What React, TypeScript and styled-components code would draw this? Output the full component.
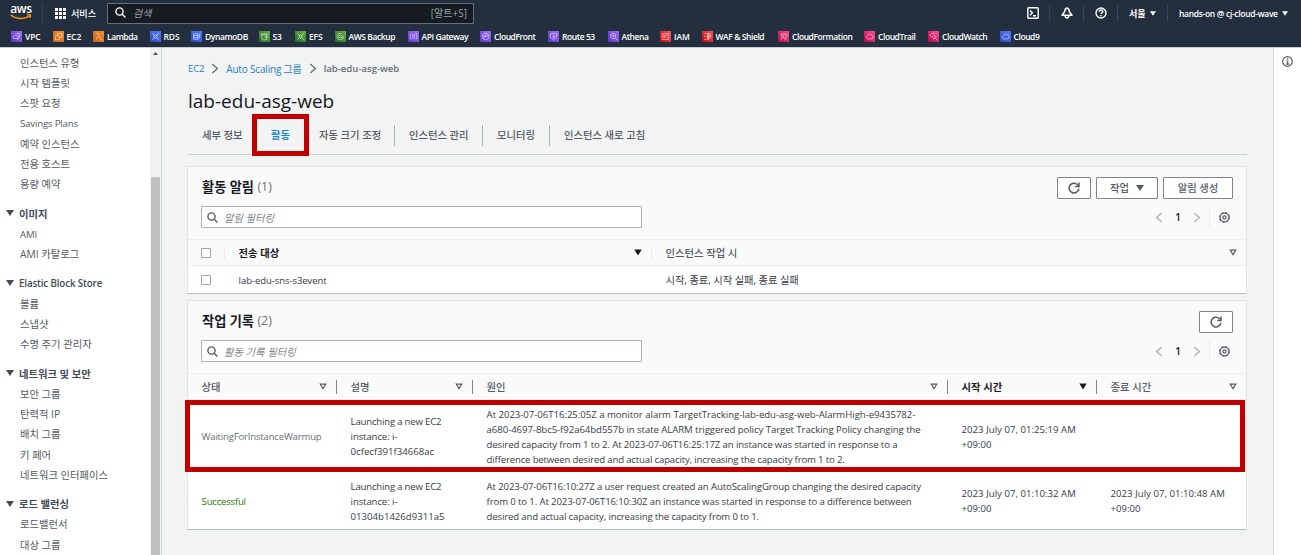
import React from "react";
import styled, { createGlobalStyle, css } from "styled-components";

const sans = `"Open Sans", "Noto Sans CJK KR", sans-serif`;

const GlobalStyle = createGlobalStyle`
  * { box-sizing: border-box; }
  body {
    margin: 0;
    background: #f2f3f3;
    font-family: ${sans};
    font-size: 10.3px;
    color: #3c4450;
    overflow: hidden;
  }
  h1, h2, p { margin: 0; font-weight: 400; }
`;

const Text = styled.span<{ $ls?: number; $size?: number }>`
  letter-spacing: ${(p) => p.$ls ?? 0}px;
  white-space: nowrap;
  ${(p) => p.$size && `font-size: ${p.$size}px;`}
`;

/* ---------- Shell ---------- */

const Page = styled.div`
  display: flex;
  flex-direction: column;
  width: 1301px;
  height: 555px;
  overflow: hidden;
`;

const Header = styled.header`
  flex: none;
  height: 47px;
  background: #232f3e;
  color: #fff;
  display: flex;
  flex-direction: column;
`;

const TopBar = styled.div`
  display: flex;
  align-items: center;
  height: 26px;
`;

const LogoCell = styled.div`
  width: 43px;
  height: 20px;
  padding-left: 10px;
  border-right: 1px solid #354150;
`;

const Logo = styled.div`
  width: 22px;
  height: 18px;
  display: flex;
  flex-direction: column;
  align-items: center;
  font-size: 12px;
  font-weight: 600;
  line-height: 11px;
  letter-spacing: -0.4px;
  svg { display: block; }
`;

const Services = styled.div`
  width: 64px;
  display: flex;
  align-items: center;
  gap: 5px;
  padding-left: 12px;
  font-weight: 500;
  font-size: 9.1px;
`;

const SearchBox = styled.div`
  width: 367px;
  height: 21px;
  border: 1px solid #687078;
  border-radius: 1px;
  background: #161a21;
  display: flex;
  align-items: center;
  padding: 0 6px 1px 7px;
  color: #95a5a6;
  font-size: 10px;
  em { margin-left: 7px; flex: 1; }
`;

const TopTools = styled.div`
  margin-left: auto;
  display: flex;
  align-items: center;
`;

const Tool = styled.div<{ $w: number; $divided?: boolean }>`
  width: ${(p) => p.$w}px;
  height: 16px;
  display: flex;
  align-items: center;
  padding-left: 11px;
  gap: 4px;
  font-size: 9.1px;
  font-weight: 600;
  border-left: 1px solid ${(p) => (p.$divided ? "#3a4654" : "transparent")};
`;

const Favorites = styled.nav`
  display: flex;
  align-items: center;
  height: 21px;
  padding-left: 11px;
`;

const Favorite = styled.a<{ $w: number; $tight?: boolean }>`
  width: ${(p) => p.$w}px;
  flex: none;
  display: flex;
  align-items: center;
  gap: 3px;
  font-size: 8.5px;
  font-weight: 600;
  line-height: 12px;
  white-space: nowrap;
  letter-spacing: ${(p) => (p.$tight ? -0.43 : -0.12)}px;
`;

const Body = styled.div`
  flex: 1;
  display: flex;
  min-height: 0;
  border-top: 1px solid #c9cdd1;
`;

/* ---------- Sidebar ---------- */

const Sidebar = styled.aside`
  width: 162px;
  flex: none;
  display: flex;
  background: #fff;
  border-right: 1px solid #d5dbdb;
`;

const SideList = styled.div`
  width: 150px;
  padding-top: 4.6px;
`;

const SideItem = styled.div<{ $latin?: boolean }>`
  height: 20.3px;
  line-height: 20.3px;
  padding-left: 20px;
  color: #545b64;
  ${(p) =>
    p.$latin &&
    css`
      font-size: 9.7px;
      line-height: 22px;
      letter-spacing: -0.2px;
    `}
`;

const SideHeading = styled.div<{ $latin?: boolean }>`
  height: 21px;
  margin-top: 8.2px;
  display: flex;
  align-items: center;
  gap: 5px;
  padding-left: 6px;
  color: #424b57;
  font-weight: 600;
  ${(p) =>
    p.$latin &&
    css`
      font-size: 9.8px;
      letter-spacing: -0.15px;
    `}
`;

const ScrollTrack = styled.div`
  width: 11px;
  background: #f1f1f1;
  display: flex;
  flex-direction: column;
  align-items: center;
  padding-top: 4px;
`;

const ScrollThumb = styled.div`
  margin-top: 122px;
  width: 9px;
  flex: 1;
  background: #c1c1c1;
`;

/* ---------- Main ---------- */

const Main = styled.main`
  flex: 1;
  background: #f2f3f3;
  padding: 12px 26px 0;
`;

const InfoRail = styled.aside`
  width: 28px;
  flex: none;
  background: #fff;
  border-left: 1px solid #d5dbdb;
  padding: 8px 0 0 8px;
`;

const Breadcrumb = styled.nav`
  display: flex;
  align-items: center;
  height: 17px;
  gap: 7px;
  color: #545b64;
`;

const Crumb = styled(Text)<{ $current?: boolean }>`
  color: ${(p) => (p.$current ? "#687078" : "#2a7fc1")};
  font-weight: ${(p) => (p.$current ? 600 : 400)};
`;

const PageTitle = styled.h1`
  height: 30px;
  margin-top: 9px;
  line-height: 30px;
  font-size: 19px;
  color: #16191f;
`;

const Tabs = styled.div`
  display: flex;
  align-items: center;
  height: 39px;
  border-bottom: 1.5px solid #c9d0d0;
`;

const Tab = styled.div<{ $w: number; $active?: boolean; $divided?: boolean }>`
  position: relative;
  width: ${(p) => p.$w}px;
  height: 21px;
  line-height: 21px;
  padding-left: 14px;
  font-weight: ${(p) => (p.$active ? 700 : 500)};
  color: ${(p) => (p.$active ? "#1f86cc" : "#545b64")};
  border-right: 1px solid ${(p) => (p.$divided ? "#aab7b8" : "transparent")};
`;

const TabMarker = styled.div`
  position: absolute;
  left: -5px;
  top: -11px;
  width: 57px;
  height: 42px;
  border: 5px solid #c00000;
`;

const Panel = styled.section<{ $top: number; $h: number }>`
  margin: ${(p) => p.$top}px 0 0 -1px;
  height: ${(p) => p.$h}px;
  background: #fff;
  border: 1px solid #e1e5e5;
  border-bottom-color: #b5bcbe;
`;

const PanelHead = styled.div`
  height: 72px;
  background: #fafafa;
  padding: 10px 13px 0 13px;
  display: flex;
  justify-content: space-between;
`;

const PanelLeft = styled.div`
  display: flex;
  flex-direction: column;
`;

const PanelTitle = styled.h2`
  height: 20px;
  line-height: 18px;
  padding-left: 1px;
  display: flex;
  align-items: center;
  gap: 3.5px;
  font-size: 13.2px;
  font-weight: 600;
  color: #16191f;
`;

const Count = styled.span`
  color: #687078;
  font-weight: 400;
  font-size: 12.4px;
`;

const Filter = styled.div`
  margin-top: 9px;
  width: 441px;
  height: 22px;
  border: 1px solid #a9b5b6;
  border-radius: 1px;
  background: #fff;
  display: flex;
  align-items: center;
  gap: 6px;
  padding-left: 5px;
  color: #7c848b;
  font-style: italic;
`;

const PanelRight = styled.div`
  display: flex;
  flex-direction: column;
  align-items: flex-end;
`;

const Actions = styled.div`
  display: flex;
  gap: 5px;
`;

const Button = styled.button<{ $w: number }>`
  width: ${(p) => p.$w}px;
  height: 22px;
  padding: 0 0 1px;
  display: flex;
  align-items: center;
  justify-content: center;
  gap: 7px;
  background: #fff;
  border: 1px solid #7d858c;
  border-radius: 1px;
  color: #545b64;
  font: 500 10.3px ${sans};
`;

const Pager = styled.div`
  display: flex;
  align-items: center;
  height: 22px;
  margin-top: 7px;
  color: #16191f;
  font-weight: 600;
  font-size: 10px;
`;

const PageNo = styled.span`
  width: 30px;
  text-align: center;
`;

const Gear = styled.span`
  height: 22px;
  margin-left: 8px;
  padding: 0 3px 0 9px;
  border-left: 1px solid #eaeded;
  display: flex;
  align-items: center;
`;

const row = css<{ $cols: string }>`
  display: grid;
  grid-template-columns: ${(p) => p.$cols};
  align-items: center;
`;

const HeadRow = styled.div<{ $cols: string }>`
  ${row}
  height: 27px;
  background: #fafafa;
  border-top: 1px solid #eaeded;
  border-bottom: 1px solid #eaeded;
`;

const HeadCell = styled.div<{ $active?: boolean; $rule?: string }>`
  height: 14px;
  display: flex;
  align-items: center;
  justify-content: space-between;
  padding: 0 9px 0 13.6px;
  font-weight: ${(p) => (p.$active ? 600 : 500)};
  color: ${(p) => (p.$active ? "#16191f" : "#545b64")};
  border-right: 1px solid ${(p) => p.$rule ?? "transparent"};
  &:last-child { padding-right: 8px; }
`;

const DataRow = styled.div<{ $cols: string; $h: number }>`
  ${row}
  position: relative;
  height: ${(p) => p.$h}px;
`;

const Cell = styled.div<{ $tone?: string }>`
  padding-left: 13.6px;
  padding-top: 1px;
  line-height: 15px;
  white-space: nowrap;
  color: ${(p) => p.$tone ?? "#363d47"};
`;

const Line = styled.p<{ $ls: number }>`
  font-size: 9.6px;
  letter-spacing: ${(p) => p.$ls}px;
`;

const Checkbox = styled.span`
  display: block;
  width: 10px;
  height: 10px;
  margin-left: -0.8px;
  border: 1px solid #9aa7a8;
  border-radius: 1px;
  background: #fff;
`;

const RowMarker = styled.div`
  position: absolute;
  left: -3px;
  top: 0;
  width: 1060px;
  height: 72px;
  border: 5px solid #c00000;
`;

/* ---------- Icons ---------- */

const Caret = ({ w = 8, h = 6, color = "currentColor" }) => (
  <svg width={w} height={h} viewBox="0 0 8 6">
    <path d="M0 0h8L4 6z" fill={color} />
  </svg>
);

const SortCaret = ({ filled = false }) => (
  <svg width="8" height="7" viewBox="0 0 8 7">
    <path
      d={filled ? "M0.3 0.6h7.4L4 6.6z" : "M1.3 1.2h5.4L4 5.6z"}
      fill={filled ? "#16191f" : "none"}
      stroke={filled ? "none" : "#545b64"}
      strokeWidth="1.2"
    />
  </svg>
);

const Chevron = ({ left = false, color = "#687078", w = 8, h = 11 }) => (
  <svg width={w} height={h} viewBox="0 0 8 11">
    <path d={left ? "M6.7 1 1.6 5.5l5.1 4.5" : "M1.3 1l5.1 4.5L1.3 10"} fill="none" stroke={color} strokeWidth="1.4" />
  </svg>
);

const SearchIcon = ({ color = "#545b64" }) => (
  <svg width="11" height="11" viewBox="0 0 11 11" fill="none" stroke={color} strokeWidth="1.4">
    <circle cx="4.5" cy="4.5" r="3.6" />
    <path d="M7.2 7.2l3.2 3.2" />
  </svg>
);

const RefreshIcon = () => (
  <svg width="12" height="12" viewBox="0 0 12 12" fill="none" stroke="#545b64" strokeWidth="1.5">
    <path d="M10.9 6.6A4.9 4.9 0 1 1 9.4 2.5L10.6 3.7" />
    <path d="M11 0.6v3.8H7.2" />
  </svg>
);

const GearIcon = () => (
  <svg width="11" height="11" viewBox="0 0 11 11" fill="none" stroke="#545b64">
    <circle cx="5.5" cy="5.5" r="4.4" strokeWidth="1.3" />
    <circle cx="5.5" cy="5.5" r="5" strokeWidth="1" strokeDasharray="2 1.93" />
    <circle cx="5.5" cy="5.5" r="1.6" strokeWidth="1.2" />
  </svg>
);

const InfoIcon = () => (
  <svg width="11" height="11" viewBox="0 0 11 11" fill="none" stroke="#545b64" strokeWidth="1.2">
    <circle cx="5.5" cy="5.5" r="4.8" />
    <path d="M4.3 5h1.4v3M4 8.1h3.2M5 2.9h1.3" />
  </svg>
);

const GridIcon = () => (
  <svg width="11" height="11" viewBox="0 0 11 11" fill="#fff">
    {[0, 4, 8].map((y) => [0, 4, 8].map((x) => <rect key={`${x}-${y}`} x={x} y={y} width="3" height="3" />))}
  </svg>
);

const TerminalIcon = () => (
  <svg width="12" height="12" viewBox="0 0 12 12" fill="none" stroke="#fff" strokeWidth="1.4">
    <rect x="0.8" y="0.8" width="10.4" height="10.4" rx="0.8" />
    <path d="M3 3.4l2.4 2.4L3 8.2M6 8.8h3" />
  </svg>
);

const BellIcon = () => (
  <svg width="12" height="12" viewBox="0 0 12 12" fill="none" stroke="#fff" strokeWidth="1.5">
    <path d="M6 0.9C4.4 1.2 3.9 2.6 3.8 4.2 3.6 5.6 2 6.6 1 8.2h10C10 6.6 8.4 5.6 8.2 4.2 8.1 2.6 7.6 1.2 6 0.9z" strokeLinejoin="round" />
    <path d="M4.2 8.6c0 3.2 3.6 3.2 3.6 0" />
  </svg>
);

const HelpIcon = () => (
  <svg width="12" height="12" viewBox="0 0 12 12" fill="none" stroke="#fff" strokeWidth="1.4">
    <circle cx="6" cy="6" r="5" />
    <path d="M4.2 4.8c0-2.4 3.6-2.2 3.6-0.1C7.8 5.9 6 5.8 6 7.1M6 8v1.2" />
  </svg>
);

const glyphs: Record<string, string> = {
  vpc: "M5.4 2L7.8 2.8v2.6L5.6 8M2.4 6.8a1.2 1.2 0 0 1 .4-2.2 1.5 1.5 0 0 1 2.8 0 1.1 1.1 0 0 1 0 2.2z",
  ec2: "M2 4.4h3.8V8H2zM4.2 4.4V2.2H8v3.6H5.8",
  lambda: "M3 2.2h1.6L7.2 8h1M4.6 4.6L2.6 8",
  rds: "M2 2l1.8 1.8M8 2L6.2 3.8M2 8l1.8-1.8M8 8L6.2 6.2M3.7 3.7h2.6v2.6H3.7z",
  dynamo: "M2.4 2.6h3.8M2.4 2.6v5h3.8v-5M2.4 4.3h3.8M2.4 6h3.8M8 2.4L7 4.6h1.1L7 7",
  s3: "M2.2 2.8h5.2L6.8 8H2.8zM2.2 2.8c1 1 4.2 1 5.2 0M4.8 5l3.2 1",
  efs: "M2 2l2 2M8 2L6 4M2 8l2-2M8 8L6 6M4 4h2.2v2.2H4z",
  backup: "M5 2a3 3 0 1 0 2.9 3M3.6 6a1 1 0 0 1 .4-1.7 1.2 1.2 0 0 1 2.2 0A1 1 0 0 1 6.4 6z",
  api: "M3.2 2L2 3v4l1.2 1M6.8 2L8 3v4L6.8 8M4.2 2.6v4.8M5.8 2.6v4.8",
  globe: "M5 2a3 3 0 1 0 0.01 0M2.4 4c2 1.4 3.6 1.4 5.2 0M3.2 7.4C4 5 5 4 6.4 2.6",
  route: "M2.2 2.6L5 2l2.8 0.6v3L5 8.2 2.2 5.6zM4.2 4h1.4v1.2H4.4M5.6 5.2v1H4.2",
  athena: "M4.6 2.2a2.4 2.4 0 1 0 0.01 0M6.4 6.2L8.2 8.2M3.4 3.8h2.4M3.4 5.2h2.4",
  iam: "M2 2.6h6v5H2zM3.4 4.2h1.4v1.6H3.4zM6 4h1M6 6h1",
  waf: "M2 2.4h2M2 5h2M2 7.6h2M5 2l2.6 1v3L5 8zM5 5h3M6 2v6",
  formation: "M3 8V6h2.4V4.4H3V2.8h3.4a1.4 1.4 0 0 1 .6 2.8M7 5.6v1.8H5.6",
  cloud: "M3.2 7.2a1.5 1.5 0 0 1 0-2.9 2 2 0 0 1 3.8-0.2 1.6 1.6 0 0 1 .2 3.1z",
  watch: "M2.9 5.4a1.3 1.3 0 0 1 0-2.4 1.9 1.9 0 0 1 3.5 0M5.6 4.2a1.4 1.4 0 1 0 0.01 0M6.6 6.6l1.6 1.6",
};

const palette: Record<string, [string, string]> = {
  purple: ["#5a35c4", "#a070f5"],
  orange: ["#d05c17", "#f79020"],
  blue: ["#2f49b8", "#527fff"],
  green: ["#1f6b2c", "#6cae3e"],
  red: ["#bd0816", "#ff5252"],
  pink: ["#b0084d", "#ff4f8b"],
};

const ServiceIcon = ({ tone, glyph }: { tone: string; glyph: string }) => (
  <svg width="11" height="11" viewBox="0 0 10 10">
    <defs>
      <linearGradient id={`g-${tone}`} x1="0" y1="1" x2="1" y2="0">
        <stop offset="0" stopColor={palette[tone][0]} />
        <stop offset="1" stopColor={palette[tone][1]} />
      </linearGradient>
    </defs>
    <rect width="10" height="10" fill={`url(#g-${tone})`} />
    <path d={glyphs[glyph]} fill="none" stroke="#fff" strokeOpacity="0.8" strokeWidth="0.6" />
  </svg>
);

/* ---------- Data ---------- */

type Fav = [label: string, tone: string, glyph: string, width: number];
const favorites: Fav[] = [
  ["VPC", "purple", "vpc", 41.5],
  ["EC2", "orange", "ec2", 40.5],
  ["Lambda", "orange", "lambda", 56.5],
  ["RDS", "blue", "rds", 41.5],
  ["DynamoDB", "blue", "dynamo", 67.5],
  ["S3", "green", "s3", 36.5],
  ["EFS", "green", "efs", 39.5],
  ["AWS Backup", "green", "backup", 73],
  ["API Gateway", "purple", "api", 72.5],
  ["CloudFront", "purple", "globe", 68],
  ["Route 53", "purple", "route", 59.5],
  ["Athena", "purple", "athena", 52.5],
  ["IAM", "red", "iam", 41.5],
  ["WAF & Shield", "red", "waf", 76.5],
  ["CloudFormation", "pink", "formation", 86],
  ["CloudTrail", "pink", "cloud", 64],
  ["CloudWatch", "pink", "watch", 71.5],
  ["Cloud9", "blue", "cloud", 60],
];

const isLatin = (s: string) => /^[ -~]+$/.test(s);

const groups: { title?: string; items: string[] }[] = [
  { items: ["인스턴스 유형", "시작 템플릿", "스팟 요청", "Savings Plans", "예약 인스턴스", "전용 호스트", "용량 예약"] },
  { title: "이미지", items: ["AMI", "AMI 카탈로그"] },
  { title: "Elastic Block Store", items: ["볼륨", "스냅샷", "수명 주기 관리자"] },
  { title: "네트워크 및 보안", items: ["보안 그룹", "탄력적 IP", "배치 그룹", "키 페어", "네트워크 인터페이스"] },
  { title: "로드 밸런싱", items: ["로드밸런서", "대상 그룹"] },
];

/* A line of table text and its tracking in pixels. */
type TrackedLine = [text: string, tracking: number];

type Activity = {
  tone: string;
  height: number;
  marked: boolean;
  cells: TrackedLine[][];
};

const activities: Activity[] = [
  {
    tone: "#687078",
    height: 72,
    marked: true,
    cells: [
      [["WaitingForInstanceWarmup", -0.2]],
      [
        ["Launching a new EC2", -0.2],
        ["instance: i-", -0.12],
        ["0cfecf391f34668ac", 0],
      ],
      [
        ["At 2023-07-06T16:25:05Z a monitor alarm TargetTracking-lab-edu-asg-web-AlarmHigh-e9435782-", -0.03],
        ["a680-4697-8bc5-f92a64bd557b in state ALARM triggered policy Target Tracking Policy changing the", -0.06],
        ["desired capacity from 1 to 2. At 2023-07-06T16:25:17Z an instance was started in response to a", -0.12],
        ["difference between desired and actual capacity, increasing the capacity from 1 to 2.", -0.16],
      ],
      [
        ["2023 July 07, 01:25:19 AM", 0.02],
        ["+09:00", 0],
      ],
      [],
    ],
  },
  {
    tone: "#1d8102",
    height: 57,
    marked: false,
    cells: [
      [["Successful", -0.22]],
      [
        ["Launching a new EC2", -0.2],
        ["instance: i-", -0.12],
        ["01304b1426d9311a5", 0],
      ],
      [
        ["At 2023-07-06T16:10:27Z a user request created an AutoScalingGroup changing the desired capacity", -0.12],
        ["from 0 to 1. At 2023-07-06T16:10:30Z an instance was started in response to a difference between", -0.12],
        ["desired and actual capacity, increasing the capacity from 0 to 1.", -0.155],
      ],
      [
        ["2023 July 07, 01:10:32 AM", 0.02],
        ["+09:00", 0],
      ],
      [
        ["2023 July 07, 01:10:48 AM", 0.02],
        ["+09:00", 0],
      ],
    ],
  },
];

const alarmCols = "37px 427px 1fr";
const historyCols = "149px 136px 475px 149px 1fr";

const Paging = () => (
  <Pager>
    <Chevron left color="#aab7b8" />
    <PageNo>1</PageNo>
    <Chevron color="#aab7b8" />
    <Gear>
      <GearIcon />
    </Gear>
  </Pager>
);

export default function App() {
  return (
    <Page>
      <GlobalStyle />
      <Header>
        <TopBar>
          <LogoCell>
            <Logo>
              aws
              <svg width="22" height="6" viewBox="0 0 22 6" fill="none" stroke="#ff9900" strokeWidth="1.4">
                <path d="M0.8 1c5 4.4 13.4 4.6 18.6 1.2M17.2 0.8c3-0.6 4 0.2 2.8 3" />
              </svg>
            </Logo>
          </LogoCell>
          <Services>
            <GridIcon />
            <Text>서비스</Text>
          </Services>
          <SearchBox>
            <SearchIcon color="#fff" />
            <em>검색</em>
            <Text>[알트+S]</Text>
          </SearchBox>
          <TopTools>
            <Tool $w={34}>
              <TerminalIcon />
            </Tool>
            <Tool $w={34} $divided>
              <BellIcon />
            </Tool>
            <Tool $w={34} $divided>
              <HelpIcon />
            </Tool>
            <Tool $w={50} $divided>
              <Text>서울</Text>
              <Caret w={6} h={5} />
            </Tool>
            <Tool $w={134} $divided>
              <Text $ls={-0.32} $size={8.5}>
                hands-on @ cj-cloud-wave
              </Text>
              <Caret w={6} h={5} />
            </Tool>
          </TopTools>
        </TopBar>
        <Favorites>
          {favorites.map(([label, tone, glyph, width]) => (
            <Favorite key={label} $w={width} $tight={label.length > 4}>
              <ServiceIcon tone={tone} glyph={glyph} />
              {label}
            </Favorite>
          ))}
        </Favorites>
      </Header>

      <Body>
        <Sidebar>
          <SideList>
            {groups.map((group, i) => (
              <React.Fragment key={i}>
                {group.title && (
                  <SideHeading $latin={isLatin(group.title)}>
                    <Caret />
                    {group.title}
                  </SideHeading>
                )}
                {group.items.map((item) => (
                  <SideItem key={item} $latin={isLatin(item)}>
                    {item}
                  </SideItem>
                ))}
              </React.Fragment>
            ))}
          </SideList>
          <ScrollTrack>
            <svg width="5" height="3" viewBox="0 0 5 3">
              <path d="M0 3h5L2.5 0z" fill="#505050" />
            </svg>
            <ScrollThumb />
          </ScrollTrack>
        </Sidebar>

        <Main>
          <Breadcrumb>
            <Crumb $size={9.6} $ls={-0.2}>
              EC2
            </Crumb>
            <Chevron />
            <Crumb $size={10} $ls={-0.18}>
              Auto Scaling 그룹
            </Crumb>
            <Chevron />
            <Crumb $current $size={9.6} $ls={-0.02}>
              lab-edu-asg-web
            </Crumb>
          </Breadcrumb>
          <PageTitle>
            <Text>lab-edu-asg-web</Text>
          </PageTitle>
          <Tabs>
            <Tab $w={69}>세부 정보</Tab>
            <Tab $w={48} $active>
              활동
              <TabMarker />
            </Tab>
            <Tab $w={90} $divided>
              자동 크기 조정
            </Tab>
            <Tab $w={88} $divided>
              인스턴스 관리
            </Tab>
            <Tab $w={67} $divided>
              모니터링
            </Tab>
            <Tab $w={120}>인스턴스 새로 고침</Tab>
          </Tabs>

          <Panel $top={11} $h={128}>
            <PanelHead>
              <PanelLeft>
                <PanelTitle>
                  <Text>활동 알림</Text>
                  <Count>(1)</Count>
                </PanelTitle>
                <Filter>
                  <SearchIcon />
                  <Text>알림 필터링</Text>
                </Filter>
              </PanelLeft>
              <PanelRight>
                <Actions>
                  <Button $w={34}>
                    <RefreshIcon />
                  </Button>
                  <Button $w={62}>
                    작업
                    <Caret />
                  </Button>
                  <Button $w={70}>알림 생성</Button>
                </Actions>
                <Paging />
              </PanelRight>
            </PanelHead>
            <HeadRow $cols={alarmCols}>
              <HeadCell $rule="#eaeded">
                <Checkbox />
              </HeadCell>
              <HeadCell $active $rule="#eaeded">
                전송 대상
                <SortCaret filled />
              </HeadCell>
              <HeadCell>
                인스턴스 작업 시
                <SortCaret />
              </HeadCell>
            </HeadRow>
            <DataRow $cols={alarmCols} $h={27}>
              <Cell>
                <Checkbox />
              </Cell>
              <Cell>
                <Line $ls={-0.1}>lab-edu-sns-s3event</Line>
              </Cell>
              <Cell>
                <Text $ls={-0.1}>시작, 종료, 시작 실패, 종료 실패</Text>
              </Cell>
            </DataRow>
          </Panel>

          <Panel $top={6} $h={230}>
            <PanelHead>
              <PanelLeft>
                <PanelTitle>
                  <Text>작업 기록</Text>
                  <Count>(2)</Count>
                </PanelTitle>
                <Filter>
                  <SearchIcon />
                  <Text>활동 기록 필터링</Text>
                </Filter>
              </PanelLeft>
              <PanelRight>
                <Actions>
                  <Button $w={34}>
                    <RefreshIcon />
                  </Button>
                </Actions>
                <Paging />
              </PanelRight>
            </PanelHead>
            <HeadRow $cols={historyCols}>
              <HeadCell $rule="#7d858c">
                상태
                <SortCaret />
              </HeadCell>
              <HeadCell $rule="#7d858c">
                설명
                <SortCaret />
              </HeadCell>
              <HeadCell $rule="#7d858c">
                원인
                <SortCaret />
              </HeadCell>
              <HeadCell $active $rule="#7d858c">
                시작 시간
                <SortCaret filled />
              </HeadCell>
              <HeadCell>
                종료 시간
                <SortCaret />
              </HeadCell>
            </HeadRow>
            {activities.map((activity, r) => (
              <DataRow key={r} $cols={historyCols} $h={activity.height}>
                {activity.cells.map((lines, c) => (
                  <Cell key={c} $tone={c === 0 ? activity.tone : undefined}>
                    {lines.map(([text, tracking]) => (
                      <Line key={text} $ls={tracking}>
                        {text}
                      </Line>
                    ))}
                  </Cell>
                ))}
                {activity.marked && <RowMarker />}
              </DataRow>
            ))}
          </Panel>
        </Main>

        <InfoRail>
          <InfoIcon />
        </InfoRail>
      </Body>
    </Page>
  );
}
